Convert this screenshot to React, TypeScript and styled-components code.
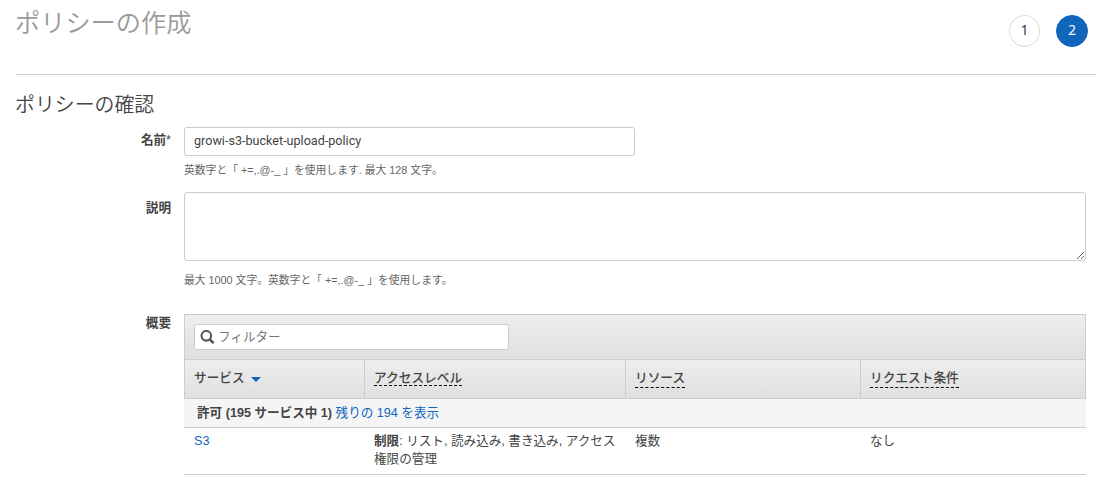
import React, { useState } from "react";
import styled, { createGlobalStyle, css } from "styled-components";

const GlobalStyle = createGlobalStyle`
  * { box-sizing: border-box; }
  body {
    margin: 0;
    background: #fff;
    color: #444;
    font: 12.6px/18px "Liberation Sans", "Noto Sans CJK JP", sans-serif;
  }
`;

const Page = styled.main`
  width: 1115px;
  height: 494px;
  padding: 0 19px 0 16px;
  overflow: hidden;
`;

const Header = styled.header`
  display: flex;
  justify-content: space-between;
  height: 75px;
  border-bottom: 1px solid #ccc;
`;

const Title = styled.h1`
  margin: 4px 0 0 -1px;
  color: #999;
  font-size: 25.2px;
  font-weight: 350;
  line-height: 38px;
`;

const Steps = styled.div`
  display: flex;
  gap: 16px;
  padding: 15px 8px 0 0;
`;

const Step = styled.span<{ $active?: boolean }>`
  display: flex;
  align-items: center;
  justify-content: center;
  width: ${(p) => (p.$active ? 32 : 31)}px;
  height: 32px;
  padding-bottom: 2px;
  border: 1px solid ${(p) => (p.$active ? "#1166bb" : "#ddd")};
  border-radius: 50%;
  background: ${(p) => (p.$active ? "#1166bb" : "#fff")};
  color: ${(p) => (p.$active ? "#fff" : "#333")};
  font-family: "Noto Sans", sans-serif;
  font-size: 13.5px;
`;

const Subtitle = styled.h2`
  margin: 15px 0 7px -1px;
  font-size: 19.9px;
  font-weight: 350;
  line-height: 30px;
`;

const Field = styled.div<{ $height: number }>`
  display: grid;
  grid-template-columns: 155px 902px;
  column-gap: 13px;
  align-items: start;
  height: ${(p) => p.$height}px;
`;

const Label = styled.label<{ $top?: number }>`
  padding-top: ${(p) => p.$top ?? 4}px;
  text-align: right;
  font-weight: 700;
  font-size: 12.6px;
`;

const Star = styled.span`
  font-weight: 400;
`;

const control = css`
  display: block;
  border: 1px solid #ccc;
  border-radius: 3px;
  background: #fff;
  color: #444;
  font: inherit;
  outline: none;
`;

const NameInput = styled.input`
  ${control}
  width: 451px;
  height: 29px;
  padding: 0 9px 2px;
  font-family: "Roboto", "Noto Sans CJK JP", sans-serif;
`;

const Description = styled.textarea`
  ${control}
  width: 902px;
  height: 69px;
  padding: 5px 9px;
  resize: both;
`;

const Help = styled.p<{ $gap: number }>`
  margin: ${(p) => p.$gap}px 0 0;
  color: #666;
  font-size: 10.8px;
  line-height: 16px;
`;

const Table = styled.div`
  border-top: 1px solid #ccc;
`;

const bar = css`
  background: linear-gradient(#eee, #dfdfdf);
  border: 1px solid #ccc;
  border-top: 0;
`;

const FilterBar = styled.div`
  ${bar}
  height: 45px;
  padding: 9px;
`;

const FilterBox = styled.div`
  display: flex;
  align-items: center;
  gap: 3px;
  width: 315px;
  height: 26px;
  padding-left: 5px;
  border: 1px solid #ccc;
  border-radius: 3px;
  background: #fff;
`;

const FilterInput = styled.input`
  flex: 1;
  min-width: 0;
  height: 22px;
  padding: 0 0 1px;
  border: 0;
  background: transparent;
  color: #444;
  font: inherit;
  outline: none;
  &::placeholder { color: #777; opacity: 1; }
`;

const columns = css`
  display: grid;
  grid-template-columns: 180px 261px 235px 226px;
`;

const HeadRow = styled.div`
  ${columns}
  height: 39px;
  background: linear-gradient(#eee, #dfdfdf);
  border-bottom: 1px solid #ccc;
  border-right: 1px solid #ccc;
`;

const HeadCell = styled.div`
  display: flex;
  align-items: flex-start;
  padding: 9px 9px 0;
  border-left: 1px solid #ccc;
  font-size: 12.7px;
  font-weight: 500;
`;

const Term = styled.span<{ $tall?: boolean }>`
  height: ${(p) => (p.$tall ? 19 : 17)}px;
  border-bottom: 1px dashed #000;
`;

const SortArrow = styled.i`
  margin: 8px 0 0 6px;
  border: 5px solid transparent;
  border-top: 5px solid #1166bb;
  border-bottom: 0;
`;

const GroupRow = styled.div`
  height: 29px;
  padding: 5px 13px 0;
  background: #f5f5f5;
  border-bottom: 1px solid #ccc;
`;

const Link = styled.a`
  color: #1166bb;
  text-decoration: none;
`;

const DataRow = styled.div`
  ${columns}
  height: 47px;
  border-bottom: 1px solid #ccc;
`;

const Cell = styled.div`
  padding: 4px 0 0 10px;
  white-space: nowrap;
`;

const SearchIcon = () => (
  <svg width="15" height="15" viewBox="0 0 15 15" fill="none" stroke="#555">
    <circle cx="6.3" cy="5.8" r="4.8" strokeWidth="2.1" />
    <path d="M9.8 9.3L13.6 13.2" strokeWidth="2.6" />
  </svg>
);

export default function App() {
  const [name, setName] = useState("growi-s3-bucket-upload-policy");
  return (
    <Page>
      <GlobalStyle />
      <Header>
        <Title>ポリシーの作成</Title>
        <Steps>
          <Step>1</Step>
          <Step $active>2</Step>
        </Steps>
      </Header>
      <Subtitle>ポリシーの確認</Subtitle>
      <Field $height={65}>
        <Label htmlFor="name">名前<Star>*</Star></Label>
        <div>
          <NameInput id="name" value={name} onChange={(e) => setName(e.target.value)} />
          <Help $gap={6}>英数字と「 +=,.@-_ 」を使用します. 最大 128 文字。</Help>
        </div>
      </Field>
      <Field $height={122}>
        <Label htmlFor="description" $top={7}>説明</Label>
        <div>
          <Description id="description" />
          <Help $gap={11}>最大 1000 文字。英数字と「 +=,.@-_ 」を使用します。</Help>
        </div>
      </Field>
      <Field $height={161}>
        <Label as="div" $top={0}>概要</Label>
        <Table>
          <FilterBar>
            <FilterBox>
              <SearchIcon />
              <FilterInput placeholder="フィルター" />
            </FilterBox>
          </FilterBar>
          <HeadRow>
            <HeadCell>サービス<SortArrow /></HeadCell>
            <HeadCell><Term>アクセスレベル</Term></HeadCell>
            <HeadCell><Term $tall>リソース</Term></HeadCell>
            <HeadCell><Term $tall>リクエスト条件</Term></HeadCell>
          </HeadRow>
          <GroupRow>
            <b>許可 (195 サービス中 1)</b> <Link>残りの 194 を表示</Link>
          </GroupRow>
          <DataRow>
            <Cell><Link>S3</Link></Cell>
            <Cell><b>制限</b>: リスト, 読み込み, 書き込み, アクセス<br />権限の管理</Cell>
            <Cell>複数</Cell>
            <Cell>なし</Cell>
          </DataRow>
        </Table>
      </Field>
    </Page>
  );
}
